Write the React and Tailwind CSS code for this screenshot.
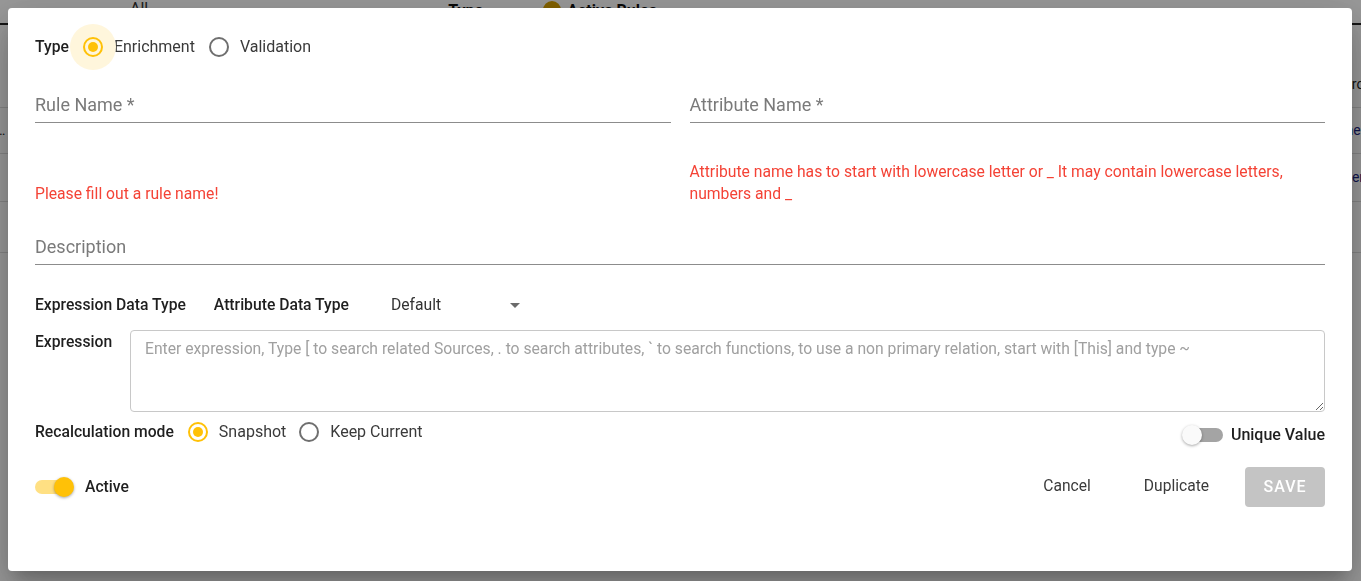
import React from 'react';

function Radio({ checked, halo, label }) {
  return (
    <label className="flex items-center cursor-pointer">
      <span className="relative w-[42px] h-[42px] shrink-0 flex items-center justify-center">
        {halo && <span className="absolute w-[46px] h-[46px] rounded-full bg-[#fff6dc]" />}
        <span
          className={`relative w-[20px] h-[20px] rounded-full border-2 flex items-center justify-center ${
            checked ? 'border-[#ffc107]' : 'border-[#6f6f6f]'
          }`}
        >
          {checked && <span className="w-[10px] h-[10px] rounded-full bg-[#ffc107]" />}
        </span>
      </span>
      <span className="text-[16px] text-[#3a3a3a]">{label}</span>
    </label>
  );
}

function Toggle({ on }) {
  return (
    <span className="relative w-[41px] h-[22px] shrink-0 flex items-center">
      <span
        className={`absolute h-[14px] rounded-full ${
          on ? 'left-0 w-[36px] bg-[#ffe083]' : 'left-[4px] w-[37px] bg-[#a4a4a4]'
        }`}
      />
      <span
        className={`absolute top-[1px] w-[20px] h-[20px] rounded-full shadow-[0_1px_3px_rgba(0,0,0,0.35)] ${
          on ? 'left-[19px] bg-[#ffc107]' : 'left-0 bg-[#fafafa]'
        }`}
      />
    </span>
  );
}

function UnderlineField({ placeholder }) {
  return (
    <div className="h-[40px] pt-[10px] border-b border-[#8c8c8c]">
      <span className="block text-[18px] leading-[24px] text-[#7a7a7a]">{placeholder}</span>
    </div>
  );
}

export default function App() {
  return (
    <div className="relative w-[1361px] h-[581px] overflow-hidden bg-white font-[Roboto,'Liberation_Sans',sans-serif]">
      {/* page behind the dialog */}
      <div className="flex items-start h-[25px] border-b-2 border-[#222]">
        <span className="ml-[130px] mt-[-3px] text-[16px] text-[#333]">All</span>
        <span className="ml-[300px] mt-[-1px] text-[16px] font-bold text-[#111]">Type</span>
        <span className="ml-[60px] mt-[1px] w-[18px] h-[18px] rounded-full bg-[#d9a300]" />
        <span className="ml-[6px] mt-[-1px] text-[16px] font-bold text-[#111]">Active Rules</span>
      </div>
      <div className="mt-[37px]">
        <div className="flex items-center h-[46px] border-b border-[#ddd] text-[14px] text-[#222]">
          <span className="ml-[1343px] whitespace-nowrap">Prop</span>
        </div>
        <div className="flex items-center h-[46px] border-b border-[#ddd] text-[14px] text-[#1a237e]">
          <span className="ml-[-4px] text-[#222]">…</span>
          <span className="ml-[1326px] whitespace-nowrap">Other</span>
        </div>
        <div className="flex items-center h-[48px] border-b border-[#ddd] text-[14px] text-[#1a237e]">
          <span className="ml-[1330px] whitespace-nowrap">Other</span>
        </div>
        <div className="h-[51px] border-b border-[#ddd]" />
      </div>

      {/* dialog */}
      <div className="fixed inset-0 bg-black/40 p-[8px]">
        <div className="w-[1344px] h-[563px] bg-white rounded-[4px] shadow-[0_11px_15px_-7px_rgba(0,0,0,0.2),0_24px_38px_3px_rgba(0,0,0,0.14),0_9px_46px_8px_rgba(0,0,0,0.12)] px-[27px] pt-[16px]">
          {/* type */}
          <div className="flex items-center h-[46px]">
            <span className="text-[15.7px] font-medium text-[#1f1f1f] mr-[3px]">Type</span>
            <Radio checked halo label="Enrichment" />
            <span className="w-[3px]" />
            <Radio label="Validation" />
          </div>

          {/* names */}
          <div className="grid grid-cols-2 gap-[19px] mt-[13px]">
            <UnderlineField placeholder="Rule Name *" />
            <UnderlineField placeholder="Attribute Name *" />
          </div>

          {/* errors */}
          <div className="grid grid-cols-2 gap-[19px] mt-[38px] items-end text-[15.7px] leading-[22px] text-[#f44336]">
            <p>Please fill out a rule name!</p>
            <p className="pr-[20px]">
              Attribute name has to start with lowercase letter or _ It may contain lowercase letters, numbers and _
            </p>
          </div>

          {/* description */}
          <div className="mt-[20px]">
            <UnderlineField placeholder="Description" />
          </div>

          {/* data types */}
          <div className="flex items-center h-[20px] mt-[30px] text-[15.7px]">
            <span className="font-medium text-[#1f1f1f]">Expression Data Type</span>
            <span className="ml-[28px] font-medium text-[#1f1f1f]">Attribute Data Type</span>
            <div className="ml-[42px] w-[129px] flex items-center justify-between">
              <span className="text-[#333]">Default</span>
              <svg width="10" height="5" viewBox="0 0 10 5">
                <path d="M0 0 L10 0 L5 5 Z" fill="#6b6b6b" />
              </svg>
            </div>
          </div>

          {/* expression */}
          <div className="flex items-start mt-[15px]">
            <span className="w-[95px] shrink-0 text-[15.7px] font-medium text-[#1f1f1f]">Expression</span>
            <textarea
              className="flex-1 h-[82px] border border-[#c8c8c8] rounded-[4px] px-[14px] pt-[7px] text-[15.7px] leading-[22px] text-[#333] placeholder:text-[#a0a0a0] outline-none resize-y"
              placeholder="Enter expression, Type [ to search related Sources, . to search attributes, ` to search functions, to use a non primary relation, start with [This] and type ~"
            />
          </div>

          {/* recalculation */}
          <div className="flex items-center h-[40px]">
            <span className="text-[15.7px] font-medium text-[#1f1f1f] mr-[3px]">Recalculation mode</span>
            <Radio checked label="Snapshot" />
            <span className="w-[2px]" />
            <Radio label="Keep Current" />
            <div className="ml-auto mt-[6px] flex items-center gap-[8px]">
              <Toggle />
              <span className="text-[16px] font-medium text-[#1f1f1f]">Unique Value</span>
            </div>
          </div>

          {/* footer */}
          <div className="flex items-center h-[40px] mt-[15px]">
            <Toggle on />
            <span className="ml-[9px] text-[15.7px] font-medium text-[#1f1f1f]">Active</span>
            <div className="ml-auto flex items-center gap-[17px]">
              <button className="h-[40px] pl-[19px] pr-[17px] text-[15.6px] text-[#3a3a3a]">Cancel</button>
              <button className="h-[40px] px-[19px] text-[15.6px] text-[#3a3a3a]">Duplicate</button>
              <button className="h-[40px] w-[80px] rounded-[4px] bg-[#c4c4c4] text-[16px] font-medium tracking-[1px] text-white">
                SAVE
              </button>
            </div>
          </div>
        </div>
      </div>
    </div>
  );
}
